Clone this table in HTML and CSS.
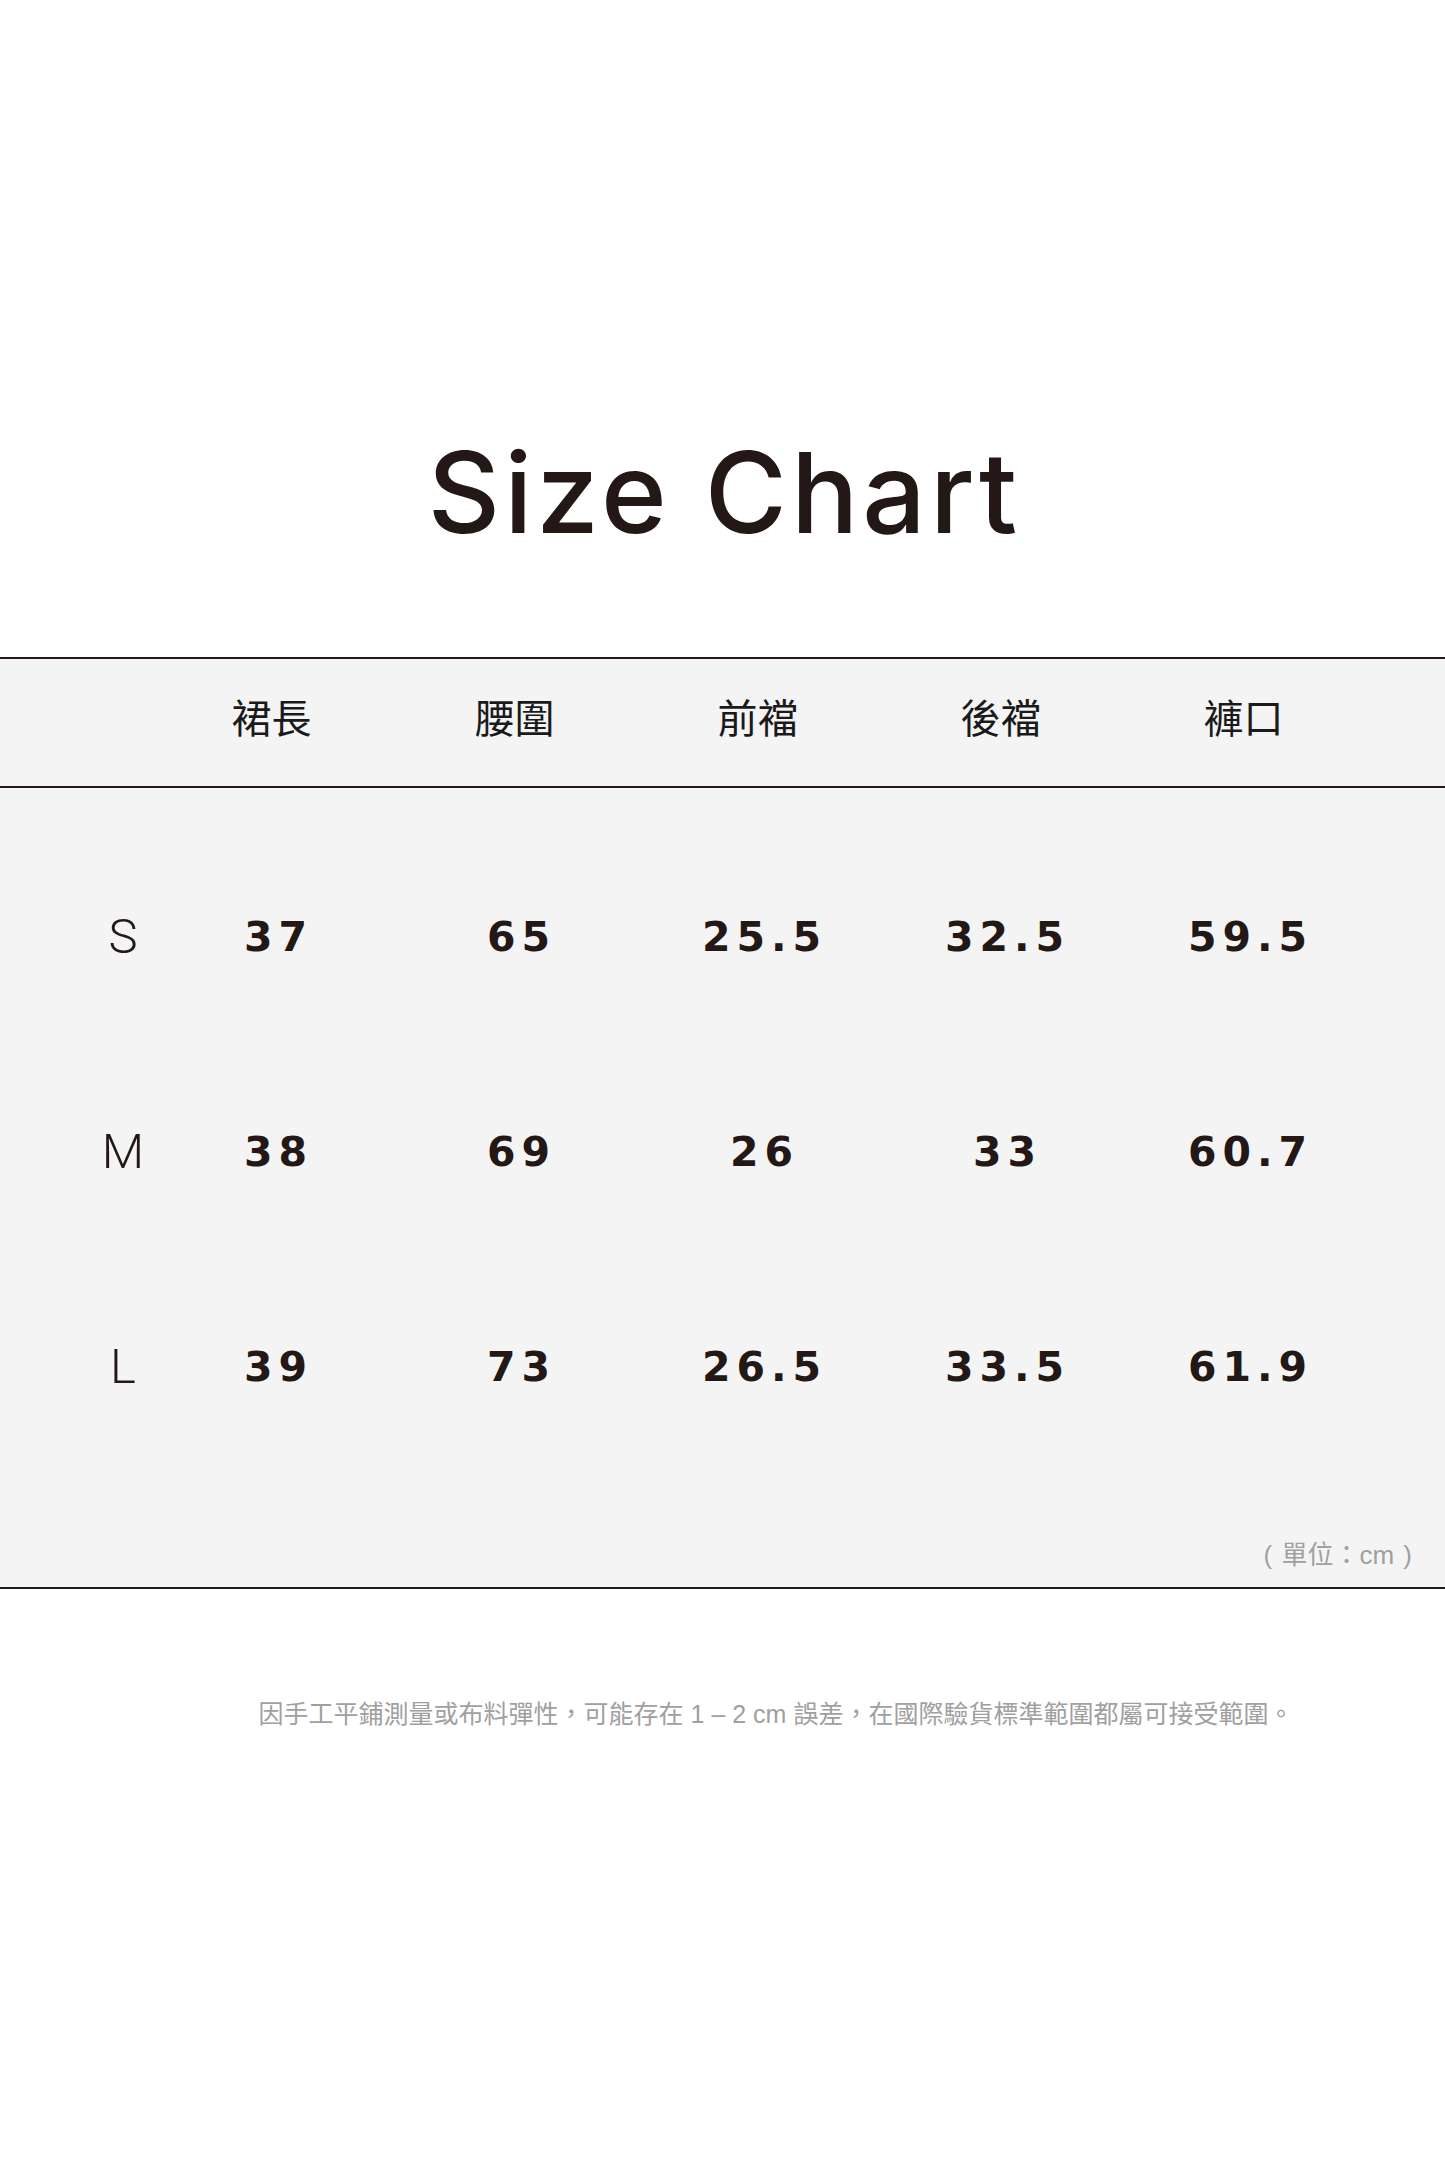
FILE: index.html
```html
<!DOCTYPE html>
<html lang="zh-Hant">
<head>
<meta charset="utf-8">
<title>Size Chart</title>
<link rel="stylesheet" href="styles.css">
</head>
<body>
<h1 class="title">Size Chart</h1>
<section class="chart">
  <div class="chart-head grid">
    <div class="cell"></div>
    <div class="cell head">裙長</div>
    <div class="cell head">腰圍</div>
    <div class="cell head">前襠</div>
    <div class="cell head">後襠</div>
    <div class="cell head">褲口</div>
  </div>
  <div class="chart-body">
    <div class="row grid">
      <div class="cell size">S</div>
      <div class="cell val">37</div>
      <div class="cell val">65</div>
      <div class="cell val">25.5</div>
      <div class="cell val">32.5</div>
      <div class="cell val">59.5</div>
    </div>
    <div class="row grid">
      <div class="cell size">M</div>
      <div class="cell val">38</div>
      <div class="cell val">69</div>
      <div class="cell val">26</div>
      <div class="cell val">33</div>
      <div class="cell val">60.7</div>
    </div>
    <div class="row grid">
      <div class="cell size">L</div>
      <div class="cell val">39</div>
      <div class="cell val">73</div>
      <div class="cell val">26.5</div>
      <div class="cell val">33.5</div>
      <div class="cell val">61.9</div>
    </div>
    <div class="unit">(&nbsp;單位：cm&nbsp;)</div>
  </div>
</section>
<p class="note">因手工平鋪測量或布料彈性，可能存在 1 – 2 cm 誤差，在國際驗貨標準範圍都屬可接受範圍。</p>
</body>
</html>
```

FILE: styles.css
```css
html, body {
  margin: 0;
  padding: 0;
  background: #ffffff;
}
body {
  width: 1445px;
  min-height: 2167px;
  color: #231815;
  font-family: "Noto Sans CJK TC", sans-serif;
}
.title {
  margin: 437px 0 0 0;
  font-family: "Inter", "Noto Sans", sans-serif;
  font-weight: 500;
  font-size: 112px;
  line-height: 110px;
  text-align: center;
  color: #231815;
  letter-spacing: 4px;
  padding-left: 4px;
}
.chart {
  margin-top: 110px;
  background: #f4f4f4;
  border-top: 2px solid #231815;
  border-bottom: 2px solid #231815;
}
.grid {
  display: grid;
  grid-template-columns: 150px repeat(5, 243px);
  align-items: center;
}
.chart-head {
  height: 129px;
  box-sizing: border-box;
  padding-bottom: 13px;
  border-bottom: 2px solid #231815;
}
.cell {
  text-align: center;
}
.head {
  font-family: "Noto Sans CJK TC", sans-serif;
  font-size: 40px;
  line-height: 48px;
  font-weight: 400;
  color: #1a1a1a;
}
.chart-body {
  padding-top: 41px;
}
.row {
  height: 215px;
}
.size {
  padding-left: 96px;
  font-family: "Roboto", "Liberation Sans", sans-serif;
  font-weight: 300;
  font-size: 49px;
  line-height: 56px;
  color: #231815;
}
.val {
  padding-left: 14px;
  font-family: "DejaVu Sans", sans-serif;
  font-weight: 700;
  font-size: 41px;
  line-height: 50px;
  letter-spacing: 6px;
  color: #231815;
}
.unit {
  height: 113px;
  box-sizing: border-box;
  padding: 63px 33px 14px 0;
  text-align: right;
  font-family: "Liberation Sans", "Noto Sans CJK TC", sans-serif;
  font-size: 26px;
  line-height: 36px;
  word-spacing: 2px;
  color: #9fa0a0;
}
.note {
  margin: 107px 0 0 0;
  padding-left: 107px;
  text-align: center;
  font-family: "Liberation Sans", "Noto Sans CJK TC", sans-serif;
  font-size: 25px;
  line-height: 36px;
  color: #9fa0a0;
}
```
